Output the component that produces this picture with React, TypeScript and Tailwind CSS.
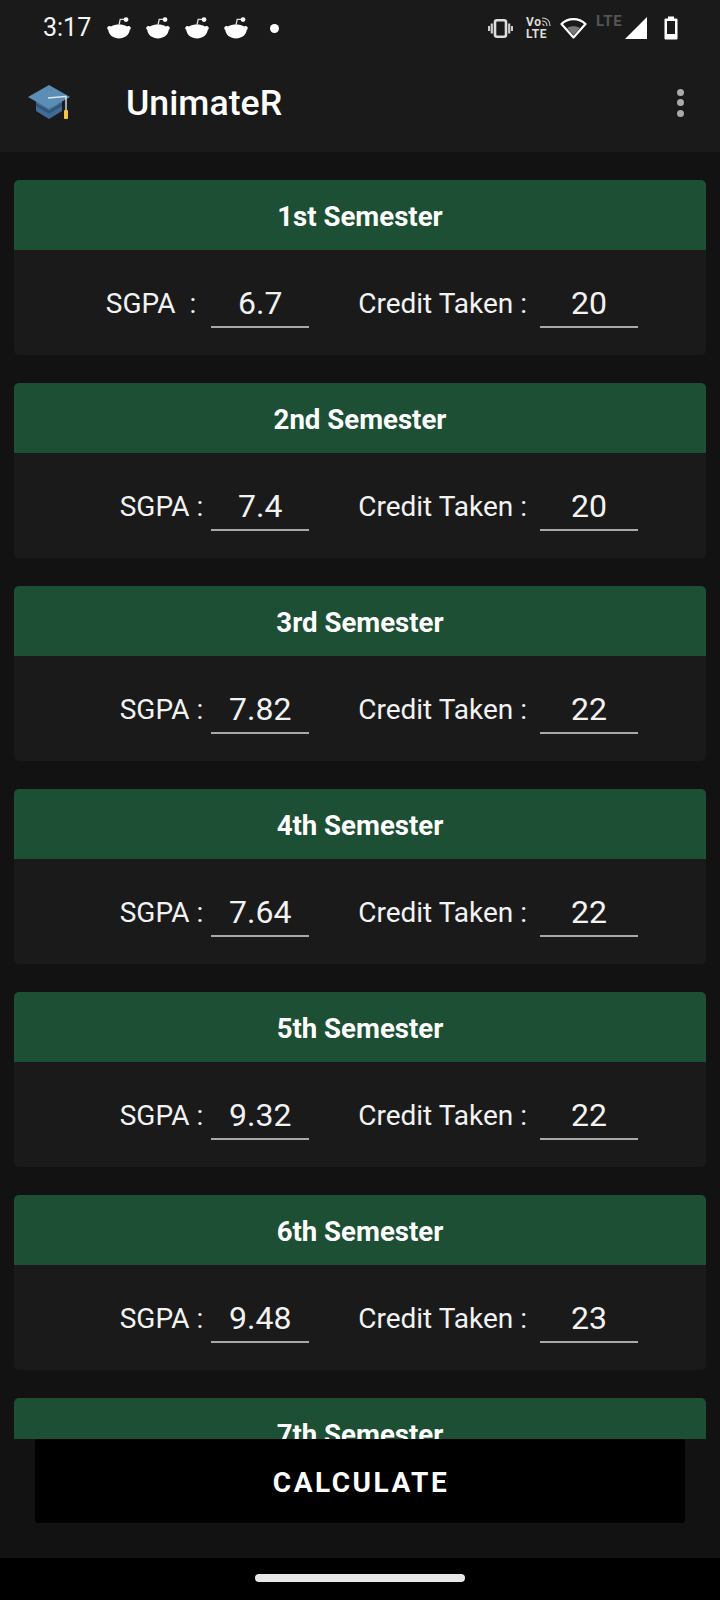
import React from "react";

const semesters = [
  { title: "1st Semester", label: "SGPA  : ", sgpa: "6.7", credit: "20" },
  { title: "2nd Semester", label: "SGPA :", sgpa: "7.4", credit: "20" },
  { title: "3rd Semester", label: "SGPA :", sgpa: "7.82", credit: "22" },
  { title: "4th Semester", label: "SGPA :", sgpa: "7.64", credit: "22" },
  { title: "5th Semester", label: "SGPA :", sgpa: "9.32", credit: "22" },
  { title: "6th Semester", label: "SGPA :", sgpa: "9.48", credit: "23" },
  { title: "7th Semester", label: "SGPA :", sgpa: "", credit: "" },
];

function RedditMark() {
  return (
    <svg width="24" height="22" viewBox="0 0 24 22" className="block">
      <path d="M0.3 10.5 C0.8 8.8 3 8.5 4 9.4 C6.5 8 9 7.5 12 7.5 C15 7.5 17.5 8 20 9.4 C21 8.5 23.2 8.8 23.7 10.5 C24 11.5 23.5 12.4 22.8 12.8 C22 18.4 17.5 21.4 12 21.4 C6.5 21.4 2 18.4 1.2 12.8 C0.5 12.4 0 11.5 0.3 10.5 Z" fill="#fff" />
      <path d="M12 8 L13.2 2.4 L17 2.4" stroke="#ddd" strokeWidth="1.3" fill="none" />
      <circle cx="19" cy="2.6" r="2.4" fill="#fff" />
    </svg>
  );
}

function Cap() {
  return (
    <svg width="44" height="36" viewBox="0 0 44 36" className="block">
      <path d="M9 14 L9 26 L22 34 L35 26 L35 14 Z" fill="#3f6b94" />
      <path d="M9 18 L22 26 L35 18 L35 21 L22 28.5 L9 21 Z" fill="#2f5478" />
      <path d="M22 0 L43 12 L22 24 L1 12 Z" fill="#5b8db5" />
      <path d="M21 13 L38 11.5 L39 11.5 L39 26" stroke="#dbe6f0" strokeWidth="1.4" fill="none" />
      <rect x="37" y="25" width="4" height="9" rx="1" fill="#f4c545" />
    </svg>
  );
}

function StatusIcons() {
  return (
    <div className="flex items-center">
      <svg width="25" height="19" viewBox="0 0 25 19" className="block">
        <rect x="7" y="1.3" width="11" height="16.4" rx="2" fill="none" stroke="#ddd" strokeWidth="2.6" />
        <path d="M3.8 4.5 V14.5 M1 7 V12 M21.2 4.5 V14.5 M24 7 V12" stroke="#ccc" strokeWidth="2.2" />
      </svg>
      <div className="ml-[13px] w-[25px] h-[24px] flex flex-col text-[#dddddd] text-[12px] leading-[12px] font-bold tracking-[0.6px] relative">
        <span>Vo</span>
        <span>LTE</span>
        <svg width="10" height="10" viewBox="0 0 10 10" className="absolute right-0 top-[1px]">
          <path d="M1 1 C6 1 9 4 9 9 M1 4 C4 4 6 6 6 9 M1 7 C2 7 3 8 3 9" stroke="#ccc" strokeWidth="1.2" fill="none" />
        </svg>
      </div>
      <svg width="27" height="22" viewBox="0 0 27 22" className="block ml-[9px]">
        <path d="M13.5 20.5 L1.5 7 C8 0.5 19 0.5 25.5 7 Z" fill="none" stroke="#fff" strokeWidth="2.2" strokeLinejoin="round" />
        <path d="M13.5 18 L7 11 C10.5 8.8 16.5 8.8 20 11 Z" fill="#777" />
      </svg>
      <div className="ml-[9px] w-[27px] h-[22px] -mt-[7px] text-[#555555] text-[15px] leading-[14px] font-bold tracking-[0.8px]">LTE</div>
      <svg width="22" height="22" viewBox="0 0 22 22" className="block ml-[2px]">
        <path d="M22 0 V22 H0 Z" fill="#fff" />
      </svg>
      <svg width="14" height="24" viewBox="0 0 14 24" className="block ml-[17px]">
        <path d="M4 0.5 H10 V2.5 H12.5 A1 1 0 0 1 13.5 3.5 V22.5 A1 1 0 0 1 12.5 23.5 H1.5 A1 1 0 0 1 0.5 22.5 V3.5 A1 1 0 0 1 1.5 2.5 H4 Z" fill="#fff" />
        <rect x="3" y="5" width="8" height="13" fill="#1a1a1a" />
      </svg>
    </div>
  );
}

function Field({ value }: { value: string }) {
  return (
    <div className="w-[98px] h-[49px] border-b-2 border-[#a8a8a8] flex items-center justify-center text-[32px] text-[#f2f2f2] pt-[1px]">
      {value}
    </div>
  );
}

function Card({ s }: { s: (typeof semesters)[number] }) {
  return (
    <section className="shrink-0 rounded-[5px] overflow-hidden bg-[#1a1a1a]">
      <h2 className="h-[70px] bg-[#1d4f35] flex items-center justify-center text-[27.6px] font-bold text-white pt-[4px]">
        {s.title}
      </h2>
      <div className="h-[105px] flex items-start justify-end pr-[68px] pt-[29px] text-[28px] text-[#f2f2f2]">
        <span className="whitespace-pre h-[49px] flex items-center">{s.label}</span>
        <div className="ml-[8px]">
          <Field value={s.sgpa} />
        </div>
        <span className="ml-[49px] h-[49px] flex items-center">Credit Taken :</span>
        <div className="ml-[13px]">
          <Field value={s.credit} />
        </div>
      </div>
    </section>
  );
}

export default function App() {
  return (
    <div className="w-[720px] h-[1600px] flex flex-col bg-[#121212] overflow-hidden font-['Roboto',sans-serif] text-white">
      <header className="h-[152px] shrink-0 bg-[#1a1a1a] flex flex-col">
        <div className="h-[56px] flex items-center justify-between pl-[43px] pr-[42px]">
          <div className="flex items-center">
            <span className="text-[25px] text-[#f5f5f5] w-[64px]">3:17</span>
            <div className="flex gap-[15px]">
              <RedditMark />
              <RedditMark />
              <RedditMark />
              <RedditMark />
            </div>
            <span className="ml-[22px] w-[9px] h-[9px] rounded-full bg-white" />
          </div>
          <StatusIcons />
        </div>
        <div className="flex-1 flex items-center pl-[27px] pr-[36px] -mt-[3px]">
          <Cap />
          <h1 className="ml-[55px] text-[35.7px] font-medium text-white flex-1 pt-[2px]">UnimateR</h1>
          <div className="flex flex-col gap-[3.5px]">
            <span className="w-[7px] h-[7px] rounded-full bg-[#aaaaaa]" />
            <span className="w-[7px] h-[7px] rounded-full bg-[#aaaaaa]" />
            <span className="w-[7px] h-[7px] rounded-full bg-[#aaaaaa]" />
          </div>
        </div>
      </header>
      <main className="flex-1 min-h-0 overflow-hidden px-[14px] pt-[28px] flex flex-col gap-[28px]">
        {semesters.map((s) => (
          <Card key={s.title} s={s} />
        ))}
      </main>
      <div className="h-[119px] shrink-0 px-[35px]">
        <button className="w-full h-[84px] bg-black rounded-[3px] text-[28px] font-bold tracking-[2.5px] text-white pt-[3px] pl-[2px]">
          CALCULATE
        </button>
      </div>
      <footer className="h-[42px] shrink-0 bg-black flex justify-center pt-[16px]">
        <div className="w-[210px] h-[8px] rounded-full bg-[#e8e8e8]" />
      </footer>
    </div>
  );
}
